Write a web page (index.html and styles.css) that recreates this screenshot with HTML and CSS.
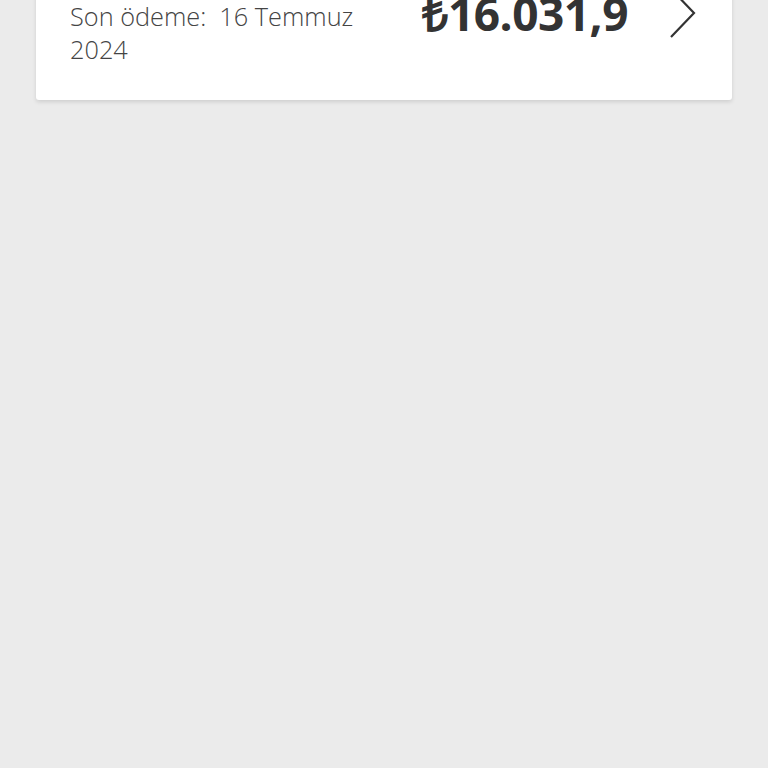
FILE: index.html
```html
<!DOCTYPE html>
<html lang="tr">
<head>
    <meta charset="UTF-8">
    <title>Fatura</title>
    <link rel="stylesheet" href="styles.css">
</head>
<body>
    <div class="card">
        <div class="due">Son ödeme:&nbsp; 16 Temmuz 2024</div>
        <div class="right">
            <span class="amount">₺16.031,9</span>
            <svg class="arrow" width="28" height="52" viewBox="0 0 28 52">
                <polyline points="2,2 25,26 2,50" fill="none" stroke="#333" stroke-width="2.2"/>
            </svg>
        </div>
    </div>
</body>
</html>
```

FILE: styles.css
```css
*{
    padding: 0;
    margin: 0;
    box-sizing: border-box;
}

body{
    background: #ebebeb;
    font-family: "Open Sans", "Liberation Sans", sans-serif;
    width: 768px;
    height: 768px;
    overflow: hidden;
}

.card{
    margin: -40px 36px 0 36px;
    background: #fff;
    border-radius: 3px;
    box-shadow: 0 2px 4px rgba(0,0,0,0.12);
    padding: 40px 35px 34px 34px;
    display: flex;
    justify-content: space-between;
    align-items: flex-start;
}

.due{
    width: 300px;
    font-size: 25.3px;
    font-weight: 300;
    line-height: 33px;
    color: #444;
}

.right{
    display: flex;
    align-items: flex-start;
}

.amount{
    margin-top: -7px;
    font-size: 46px;
    font-weight: 700;
    color: #333;
    line-height: 40px;
    letter-spacing: -0.5px;
}

.arrow{
    margin-top: -13px;
    margin-left: 41px;
}
```
